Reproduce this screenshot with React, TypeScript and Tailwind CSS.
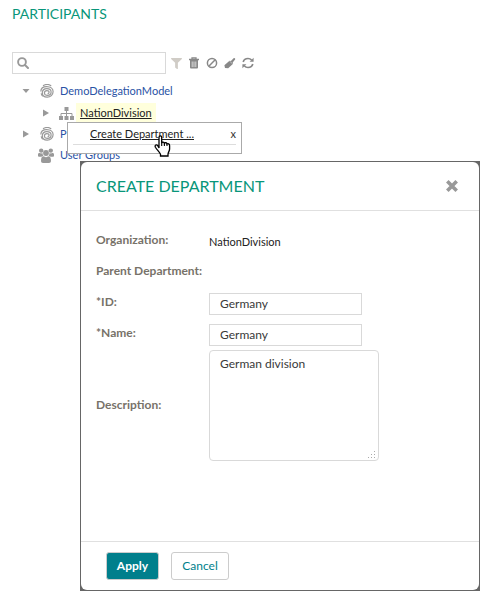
import React from "react";
import { FaFilter } from "react-icons/fa";

function SearchIcon() {
  return (
    <svg viewBox="0 0 12 12" className="h-3 w-3 shrink-0" fill="none" stroke="currentColor" strokeLinecap="round">
      <circle cx="5" cy="5" r="3.9" strokeWidth="1.9" />
      <path d="M8 8l3 3" strokeWidth="2" />
    </svg>
  );
}

function TrashIcon() {
  return (
    <svg viewBox="0 0 12 12" className="h-3 w-3" fill="none" stroke="currentColor">
      <path d="M1 2.5h10M4 2V.9h4V2" strokeWidth="1.3" />
      <path d="M2 3h8v7.600a1 1 0 0 1-1 1H3a1 1 0 0 1-1-1z" fill="currentColor" stroke="none" />
      <path d="M4.200 4.500v5.600M6 4.500v5.600M7.800 4.500v5.600" stroke="#eee" strokeWidth=".8" />
    </svg>
  );
}

function BanIcon() {
  return (
    <svg viewBox="0 0 12 12" className="h-3 w-3" fill="none" stroke="currentColor" strokeWidth="1.5">
      <circle cx="6" cy="6" r="4.600" />
      <path d="M2.800 9.200l6.400-6.400" />
    </svg>
  );
}

function BrushIcon() {
  return (
    <svg viewBox="0 0 12 12" className="h-3 w-3" fill="currentColor">
      <path d="M9.600 1.200c1-.6 2 .4 1.500 1.400L8.700 5.500l.4 1.300L4.200 11.300 1 11 .4 8.200 5.500 3.700l1.400.2z" />
      <path d="M5.800 4.200l2.600 2.600" stroke="#fff" strokeWidth=".5" />
    </svg>
  );
}

function RefreshIcon() {
  return (
    <svg viewBox="0 0 12 12" className="h-3 w-3" fill="none" stroke="currentColor" strokeWidth="1.700">
      <path d="M1.200 5C1.800 2.800 3.700 1.500 6 1.500c1.500 0 2.700.6 3.600 1.500M10.800 7c-.6 2.200-2.500 3.500-4.800 3.500-1.500 0-2.700-.6-3.600-1.500" />
      <path d="M11.600.8v4H7.600zM.4 11.200v-4h4z" fill="currentColor" stroke="none" />
    </svg>
  );
}

function ModelIcon() {
  return (
    <svg viewBox="0 0 14 14" className="h-3.5 w-3.5" fill="none" stroke="currentColor" strokeWidth="1.200">
      <path d="M3 1.800C5.500.2 9 .3 11.200 1.900" />
      <path d="M.8 7.500C.9 4.500 3.400 2.600 6.700 2.600c3.700 0 6.400 2.100 6.400 5 0 3.200-2.600 5.600-5.900 5.600-3 0-4.900-1.900-4.900-4.400 0-2.500 1.900-4.200 4.500-4.200 2.500 0 4.300 1.400 4.300 3.400 0 2-1.600 3.400-3.600 3.400-1.800 0-3.100-1-3.100-2.500 0-1.400 1-2.300 2.500-2.300 1.300 0 2.200.7 2.200 1.700 0 .9-.7 1.400-1.500 1.400" />
      <path d="M1.200 9.300c.2 1.200.8 2.200 1.600 2.900" />
    </svg>
  );
}

function SitemapIcon() {
  return (
    <svg viewBox="0 0 15 13" className="h-[13px] w-[15px]" fill="currentColor">
      <path d="M5.500 0h4v4h-4zM0 9h4v4H0zM5.500 9h4v4h-4zM11 9h4v4h-4z" />
      <path d="M7.500 4v5M2 9V6.500h11V9" fill="none" stroke="currentColor" />
    </svg>
  );
}

function UsersIcon() {
  return (
    <svg viewBox="0 0 16 15" className="h-[15px] w-4" fill="currentColor">
      <circle cx="3.200" cy="2.600" r="2.200" />
      <circle cx="12.800" cy="2.600" r="2.200" />
      <path d="M0 8V6.500C0 5.300.8 4.800 1.700 5c1 .5 1.900.5 2.700.1.100 1.200.4 2 1 2.700-.8.200-1.500.500-2 1H1C.4 8.800 0 8.500 0 8zM16 8V6.500c0-1.200-.8-1.700-1.700-1.500-1 .5-1.900.5-2.700.1-.1 1.200-.4 2-1 2.700.8.200 1.500.5 2 1H15c.6 0 1-.3 1-.8z" />
      <circle cx="8" cy="5" r="2.900" />
      <path d="M3 12.800c0-2.700.8-4.500 2.500-4.500 1.500 1.100 3.500 1.100 5 0 1.700 0 2.500 1.800 2.500 4.500 0 1.400-.8 2.200-2 2.200H5c-1.200 0-2-.8-2-2.200z" />
    </svg>
  );
}

function Arrow({ open }: { open?: boolean }) {
  return (
    <svg viewBox="0 0 8 8" className="h-2 w-2" fill="currentColor">
      <path d={open ? "M.5 2h7L4 6z" : "M1 .5v7L7 4z"} />
    </svg>
  );
}

function HandCursor() {
  return (
    <svg viewBox="0 0 18 22" className="pointer-events-none absolute top-3 left-[86px] h-[22px] w-[18px]">
      <path
        d="M5 13V2.500C5 .4 7.700.4 7.700 2.500V8c.3-1.300 2.500-1.200 2.700.3.6-1 2.400-.7 2.600.7.900-.7 2.600-.3 2.600 1.500V14c0 2-1.600 3.600-1.600 5.200V21H6.500v-1.800C5.500 17 2.900 14.800 1.400 12.200.3 10 2.700 9 3.800 10.800z"
        fill="white"
        stroke="black"
        strokeWidth="1.300"
      />
      <path d="M7.700 8v3M10.400 8.500V11M13 9.200V11" stroke="black" strokeWidth="1.100" />
    </svg>
  );
}

function ResizeGrip() {
  return (
    <svg viewBox="0 0 8 8" className="pointer-events-none absolute right-[3px] bottom-[2px] h-2 w-2" fill="#aaa">
      <path d="M6 0h1v1H6zM6 3h1v1H6zM3 3h1v1H3zM6 6h1v1H6zM3 6h1v1H3zM0 6h1v1H0z" />
    </svg>
  );
}

const toolbar = [
  { label: "Filter", icon: <FaFilter className="h-[11px] w-[11px] text-[#d0ccc6]" /> },
  { label: "Delete", icon: <TrashIcon /> },
  { label: "Disable", icon: <BanIcon /> },
  { label: "Clear", icon: <BrushIcon /> },
  { label: "Refresh", icon: <RefreshIcon /> },
];

const label = "text-[12px] leading-4 font-bold text-[#777269]";
const field = "border border-[#d9d9d9] bg-white px-2.5 text-[12px] leading-4 text-[#393939] outline-none";

function CreateDepartment() {
  return (
    <section
      role="dialog"
      aria-labelledby="dialog-title"
      className="absolute top-[161px] right-2 left-20 bg-[#666] p-px"
    >
      <div className="rounded-md bg-white">
        <header className="flex h-[49px] items-center justify-between border-b border-[#e0e0e0] pr-[21px] pl-[15px]">
          <h2 id="dialog-title" className="text-[16px] leading-6 text-[#08967a]">CREATE DEPARTMENT</h2>
          <button type="button" aria-label="Close" className="text-[#999]">
            <svg viewBox="0 0 12 12" className="h-3 w-3" stroke="currentColor" strokeWidth="3.600">
              <path d="M1.300 1.300 10.700 10.700M10.700 1.300 1.300 10.700" />
            </svg>
          </button>
        </header>
        <form className="flex flex-col">
          <div className="grid min-h-[330px] grid-cols-[113px_1fr] content-start items-center pt-[13px] pr-3.5 pl-[15px]">
            <span className={label}>Organization:</span>
            <span className="flex h-8 items-center pt-1 text-[11px] leading-4 text-[#222]">NationDivision</span>
            <span className={`${label} col-span-2 flex h-[30px] items-center`}>Parent Department:</span>
            <label htmlFor="dept-id" className={label}>*ID:</label>
            <div className="flex h-[31px] items-center pt-1">
              <input id="dept-id" defaultValue="Germany" className={`${field} h-[22px] w-[153px]`} />
            </div>
            <label htmlFor="dept-name" className={label}>*Name:</label>
            <div className="flex h-[31px] items-center pt-1">
              <input id="dept-name" defaultValue="Germany" className={`${field} h-[22px] w-[153px]`} />
            </div>
            <label htmlFor="dept-description" className={label}>Description:</label>
            <div className="relative mt-0.5 w-[170px]">
              <textarea
                id="dept-description"
                defaultValue="German division"
                className={`${field} block h-[111px] w-full resize-none rounded-sm py-[5px]`}
              />
              <ResizeGrip />
            </div>
          </div>
          <footer className="flex h-[49px] items-center gap-3 border-t border-[#e0e0e0] px-[25px]">
            <button type="button" className="h-7 w-[53px] rounded-[3px] border border-[#ccc] bg-[#007f8c] text-[12px] leading-4 font-bold text-white">
              Apply
            </button>
            <button type="button" className="h-7 w-[58px] rounded-[3px] border border-[#ccc] bg-white text-[12px] leading-4 text-[#007f8c]">
              Cancel
            </button>
          </footer>
        </form>
      </div>
    </section>
  );
}

export default function App() {
  return (
    <main className="relative min-h-screen bg-white px-3 pt-1 font-['Lato',sans-serif]">
      <h1 className="text-[14px] leading-5 text-[#08967a]">PARTICIPANTS</h1>
      <div className="mt-7 flex items-center">
        <label className="flex h-[22px] w-[154px] items-center border border-[#d9d9d9] px-1 text-[#999]">
          <SearchIcon />
          <input aria-label="Search participants" className="ml-1 min-w-0 flex-1 text-[12px] outline-none" />
        </label>
        <div className="ml-0.5 flex gap-0.5 text-[#888]">
          {toolbar.map((item) => (
            <button key={item.label} type="button" aria-label={item.label} className="flex h-4 w-4 items-center justify-center">
              {item.icon}
            </button>
          ))}
        </div>
      </div>
      <div className="relative mt-1.5 text-[11px] leading-4 text-[#2a52a5]">
        <ul className="text-[#999]">
          <li className="flex h-[22px] items-center pl-2.5">
            <Arrow open />
            <span className="ml-2.5 flex w-5"><ModelIcon /></span>
            <a href="#demo" className="text-[#2a52a5]">DemoDelegationModel</a>
          </li>
          <li className="flex h-[22px] items-center pl-[30px]">
            <Arrow />
            <span className="ml-[9px] flex w-[17px]"><SitemapIcon /></span>
            <span className="bg-[#ffffdc] px-1 py-0.5">
              <a href="#nation" className="text-[#222] underline">NationDivision</a>
            </span>
          </li>
          <li className="flex h-5 items-center pl-2.5">
            <Arrow />
            <span className="ml-2.5 flex w-5"><ModelIcon /></span>
            <a href="#p" className="text-[#2a52a5]">P</a>
          </li>
          <li className="flex h-[22px] items-center pl-[26px]">
            <span className="flex w-[22px]"><UsersIcon /></span>
            <a href="#groups" className="text-[#2a52a5]">User Groups</a>
          </li>
        </ul>
        <div className="absolute top-[42px] left-[55px] z-10 w-[175px] border border-[#aaa] bg-white px-[5px] pb-2">
          <div className="flex h-[22px] items-center justify-between border-b border-[#ddd] pl-[17px]">
            <a href="#create" className="text-[#222] underline">Create Department ...</a>
            <button type="button" aria-label="Close menu" className="text-[11px] leading-4 text-[#333]">x</button>
          </div>
          <HandCursor />
        </div>
      </div>
      <CreateDepartment />
    </main>
  );
}
